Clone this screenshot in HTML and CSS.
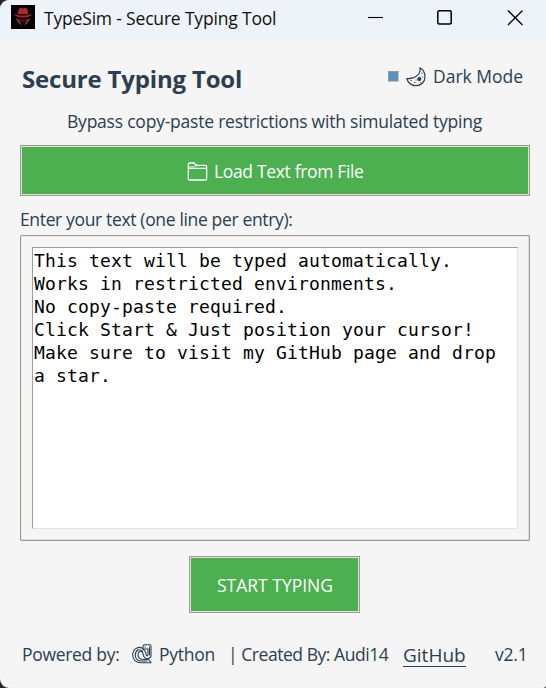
FILE: index.html
```html
<!DOCTYPE html>
<html lang="en">
<head>
<meta charset="utf-8">
<title>TypeSim - Secure Typing Tool</title>
<link rel="stylesheet" href="styles.css">
</head>
<body>
<div class="window">
  <header class="titlebar">
    <svg class="app-icon" viewBox="0 0 24 24">
      <rect width="24" height="24" fill="#050303"/>
      <path d="M7 9C7 5.500 8 2.800 10 2.800L12 3.500L14 2.800C16 2.800 17 5.500 17 9Z" fill="#b3262e"/>
      <path d="M3 8.500Q5 10.500 12 10.500T21 8.500Q20 12.500 12 12.500T3 8.500Z" fill="#b3262e"/>
      <path d="M7 9.300Q12 10.500 17 9.300" fill="none" stroke="#50151a" stroke-width=".7"/>
      <path d="M4.500 13L8 14.500L11 20.500Q7 18.500 4.500 13ZM19.500 13L16 14.500L13 20.500Q17 18.500 19.500 13Z" fill="#96333a"/>
      <path d="M8 13.500L12 15L16 13.500L14 17H10Z" fill="#292326"/>
    </svg>
    <span class="caption">TypeSim - Secure Typing Tool</span>
    <svg class="controls" viewBox="0 0 156 18" fill="none" stroke="#000">
      <path d="M0 9.500H15" stroke-width="1.100"/>
      <rect x="69.800" y="2.700" width="13.400" height="13.400" rx="1.500" stroke-width="1.500"/>
      <path d="M140 2.500L154.500 17M154.500 2.500L140 17" stroke-width="1.300"/>
    </svg>
  </header>
  <main class="content">
    <div class="heading-row">
      <h1 class="heading">Secure Typing Tool</h1>
      <label class="dark-toggle">
        <span class="checkbox"></span>
        <svg class="moon" viewBox="0 0 20 20" fill="none" stroke="#2c3e50" stroke-width="1.200" stroke-linejoin="round">
          <path d="M14 .8C15 6.500 10 12.500 .7 11.500C2 15.500 5.500 18.700 10 18.700C15 18.700 19 15 19 9.800C19 6 17 2.500 14 .8Z"/>
          <circle cx="13.300" cy="12" r="1.500" fill="#2c3e50"/>
          <path d="M16 5.500V7M16.500 9.500V10.500M8 15.500H9.500M4.500 13.500H6M10 12.500V13.500M14 15.500H15" stroke="#5b6c7b"/>
        </svg>
        <span class="dark-label">Dark Mode</span>
      </label>
    </div>
    <p class="subtitle">Bypass copy-paste restrictions with simulated typing</p>
    <button class="button load">
      <svg class="folder" viewBox="0 0 20 20" fill="none" stroke="#fff" stroke-width="1.300" stroke-linejoin="round">
        <path d="M.8 16.500V2.500Q.8 1 2.300 1H6.500L8.800 3.300H17.700Q19.200 3.300 19.200 4.800V16.500Q19.200 18 17.700 18H2.300Q.8 18 .8 16.500ZM.8 6.400H19.200"/>
        <path d="M1.500 5L7 4.700L8.800 3.700" stroke-opacity=".6"/>
      </svg>
      <span class="load-label">Load Text from File</span>
    </button>
    <p class="field-label">Enter your text (one line per entry):</p>
    <div class="frame">
      <div class="editor">This text will be typed automatically.
Works in restricted environments.
No copy-paste required.
Click Start &amp; Just position your cursor!
Make sure to visit my GitHub page and drop
a star.</div>
    </div>
    <button class="button start"><span class="start-label">START TYPING</span></button>
  </main>
  <footer class="footer">
    <span class="powered">Powered by:</span>
    <svg class="snake" viewBox="0 0 20 20" fill="none" stroke="#2c3e50" stroke-width="1.100" stroke-linejoin="round" stroke-linecap="round">
      <path d="M11 5V2.500Q11 .7 13 .7H17.500Q19 .7 19 2.500V11.500C19 15 13.500 16 12 12.500L10.500 8.500C9.500 6 6 7 6 10.500C6 14 8.500 15.500 12 15.500H16.500L19 18.700H9C4 18.700 .7 15.500 .7 11C.7 4.500 7.500 1.500 11 4.800L13.500 8L14.300 11C14.600 12.300 16 12 16 10.500V5H11"/>
      <path d="M3.300 11C3.300 6 8 4.200 10.500 7.300M3.300 11.500C3.500 15 6 17 10 17H15M13 3H13.400M17.500 3V11"/>
    </svg>
    <span class="python">Python</span>
    <span class="author">| Created By: Audi14</span>
    <a class="github">GitHub</a>
    <span class="version">v2.1</span>
  </footer>
</div>
</body>
</html>
```

FILE: styles.css
```css
* { box-sizing: border-box; }

body {
  margin: 0;
  background: #24262b;
  font-family: "Open Sans", "Noto Sans", sans-serif;
  font-size: 17.5px;
  color: #2c3e50;
}

.window {
  width: 546px;
  height: 688px;
  display: flex;
  flex-direction: column;
  overflow: hidden;
  border-radius: 9px 0 3px 9px;
  background: #f5f5f5;
  white-space: nowrap;
}

.titlebar {
  height: 40px;
  flex: none;
  display: flex;
  align-items: flex-start;
  padding: 5px 22px 0 11px;
  background: #eef3f9;
  color: #111;
}

.app-icon { width: 24px; height: 24px; flex: none; }
.caption { margin-left: 9px; line-height: 26px; letter-spacing: -0.18px; }
.controls { width: 156px; height: 18px; margin: 3px 0 0 auto; }

.content {
  padding: 0 16px 0 20px;
  display: flex;
  flex-direction: column;
}

.heading-row {
  height: 68px;
  display: flex;
  align-items: center;
  justify-content: space-between;
  padding: 9px 0 0 2px;
}

.heading {
  margin: 0;
  font-size: 24px;
  line-height: 32px;
  font-weight: 700;
  letter-spacing: -0.18px;
}
.dark-toggle { display: flex; align-items: center; width: 142px; margin-top: -5px; }
.checkbox {
  width: 11px;
  height: 11px;
  border: 1px solid #9e9a91;
  border-right-color: #cbc7c0;
  border-bottom-color: #cbc7c0;
  background: #5694bf;
}
.moon { width: 20px; height: 20px; margin: 2px 7px 0 7px; flex: none; }

.subtitle { margin: 0 0 0 47px; height: 37px; line-height: 26px; letter-spacing: -0.22px; }

.button {
  display: flex;
  align-items: center;
  padding: 0;
  border: 1px solid #9e9a91;
  box-shadow: inset 0 0 0 1px #e3e0dc;
  background: #4caf50;
  color: #fff;
  font: inherit;
}
.load { width: 510px; height: 51px; padding-left: 166px; }
.load-label { letter-spacing: -0.34px; }
.folder { width: 21px; height: 20px; margin: 2px 6px 0 0; flex: none; }

.field-label { margin: 10px 0 0; height: 29px; line-height: 26px; letter-spacing: -0.35px; }

.frame {
  width: 510px;
  height: 306px;
  padding: 11px;
  border: 1px solid #9e9a91;
  border-radius: 1px;
  box-shadow: inset -1px -1px #dedbd6, inset 1px 1px #eceae7;
}
.editor {
  height: 282px;
  padding: 1px 0 0 1px;
  border: 1px solid;
  border-color: #a0a0a0 #e3e3e3 #e3e3e3 #a0a0a0;
  background: #fff;
  color: #000;
  font: 18px/23px "DejaVu Sans Mono", monospace;
  letter-spacing: 0.163px;
  white-space: pre;
}

.start { width: 171px; height: 57px; margin: 15px 0 0 169px; padding-left: 27px; }

.footer {
  display: grid;
  grid-template-columns: 110px 27px 69px 175px 92px 40px;
  align-items: center;
  height: 26px;
  margin: 28px 0 0 22px;
  line-height: 26px;
}
.snake { width: 20px; height: 20px; }
.powered { letter-spacing: -0.3px; }
.python { letter-spacing: -0.25px; }
.author { letter-spacing: -0.45px; }
.version { letter-spacing: -0.2px; }
.github {
  justify-self: start;
  margin-top: 2px;
  border-bottom: 1px solid #2c3e50;
  font-size: 19px;
  line-height: 22px;
}
```
